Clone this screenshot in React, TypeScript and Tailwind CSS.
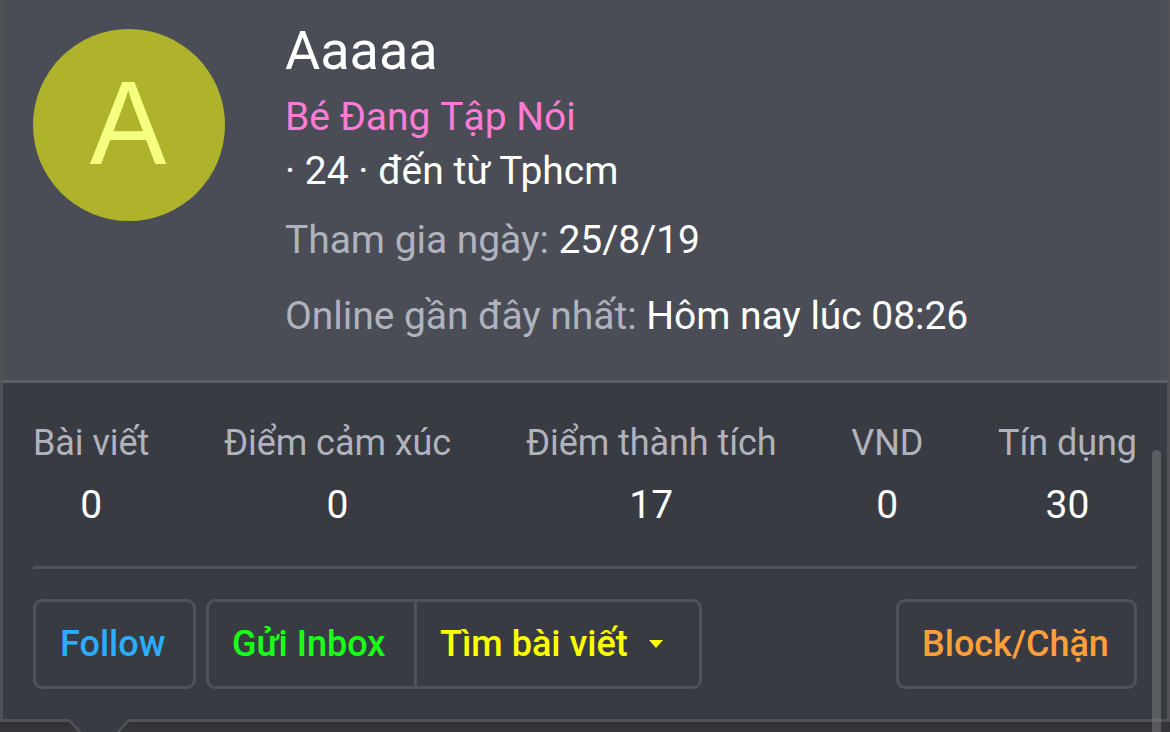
import { ReactNode } from "react"
import clsx from "clsx"

interface Stat {
    label: string
    value: number
}

const stats: Stat[] = [
    { label: "Bài viết", value: 0 },
    { label: "Điểm cảm xúc", value: 0 },
    { label: "Điểm thành tích", value: 17 },
    { label: "VND", value: 0 },
    { label: "Tín dụng", value: 30 },
]

const Button = ({ className, children }: { className: string, children: ReactNode }) => {
    return (
        <button className={clsx("flex h-[90px] items-center border-[3px] border-[#505258] text-[36px] leading-[50px] font-medium whitespace-nowrap", className)}>
            {children}
        </button>
    )
}

const InfoRow = ({ label, value }: { label: string, value: string }) => {
    return (
        <p className="tracking-[-0.04px]">
            <span className="text-[#b0b3bd]">{label}</span> {value}
        </p>
    )
}

const Header = () => {
    return (
        <div className="flex h-[383px] shrink-0 border-b-[3px] border-[#5c5f66] bg-[#4a4d55] pl-[30px] text-white">
            <div className="mt-[29px] flex size-48 shrink-0 items-center justify-center rounded-full bg-[#afb32c] font-['Liberation_Sans',sans-serif] text-[115px] leading-none text-[#f5ff80]">
                <span className="-translate-x-px -translate-y-[3px] scale-y-104">A</span>
            </div>
            <div className="ml-[60px] pt-[13px] text-[39px] leading-[54px]">
                <h4 className="text-[54px] leading-[76px]">Aaaaa</h4>
                <div className="mt-px text-[#ff7bd5]">Bé Đang <span className="[font-kerning:none]">Tập Nói</span></div>
                <div>· 24 · đến từ Tphcm</div>
                <div className="mt-[15px] flex flex-col gap-[22px]">
                    <InfoRow label="Tham gia ngày:" value="25/8/19" />
                    <InfoRow label="Online gần đây nhất:" value="Hôm nay lúc 08:26" />
                </div>
            </div>
        </div>
    )
}

const App = () => {
    return (
        <div className="relative flex h-[732px] w-[1170px] flex-col overflow-hidden bg-linear-to-b from-[#303236] from-[722px] to-[#36383c] font-['Roboto',sans-serif]">
            <div className="flex h-[722px] shrink-0 flex-col border-x-[3px] border-b-[3px] border-[#505258] bg-[#393b42]">
                <Header />
                <div className="px-[30px] pt-[35px]">
                    <div className="flex justify-between">
                        {stats.map(stat => (
                            <dl key={stat.label} className="text-center">
                                <dt className="text-[36px] leading-[51px] tracking-[-0.07px] text-[#b0b3bd]">{stat.label}</dt>
                                <dd className="mt-[9px] text-[39px] leading-[55px] text-white">{stat.value}</dd>
                            </dl>
                        ))}
                    </div>
                    <hr className="mt-[33px] border-t-[3px] border-[#505258]" />
                    <div className="mt-[30px] flex">
                        <Button className="w-[163px] rounded-[9px] pl-6 text-[#2badff]">Follow</Button>
                        <Button className="ml-[10px] w-[211px] rounded-l-[9px] pl-[23px] text-[#1aff1a]">Gửi Inbox</Button>
                        <Button className="w-[285px] rounded-r-[9px] border-l-0 pl-[23px] text-[#ffff00]">
                            Tìm bài viết
                            <svg className="ml-[21px]" width="14" height="8" viewBox="0 0 14 8" fill="currentColor">
                                <path d="M0 0h14L7 8z" />
                            </svg>
                        </Button>
                        <Button className="ml-auto w-[241px] rounded-[9px] pl-[23px] text-[#ff9f3b]">Block/Chặn</Button>
                    </div>
                </div>
            </div>
            {/* tooltip arrow */}
            <svg className="absolute top-[719px] left-[66px]" width="66" height="13" viewBox="0 0 66 13">
                <path d="M1 0h64L52 13H14z" fill="#393b42" />
                <path d="M1 -1l14 15M65 -1l-14 15" fill="none" stroke="#55575d" strokeWidth="2" />
            </svg>
            {/* scrollbar thumb */}
            <div className="absolute top-[450px] left-[1152px] h-[300px] w-[9px] rounded-full bg-[#808080]/50" />
        </div>
    )
}

export default App
